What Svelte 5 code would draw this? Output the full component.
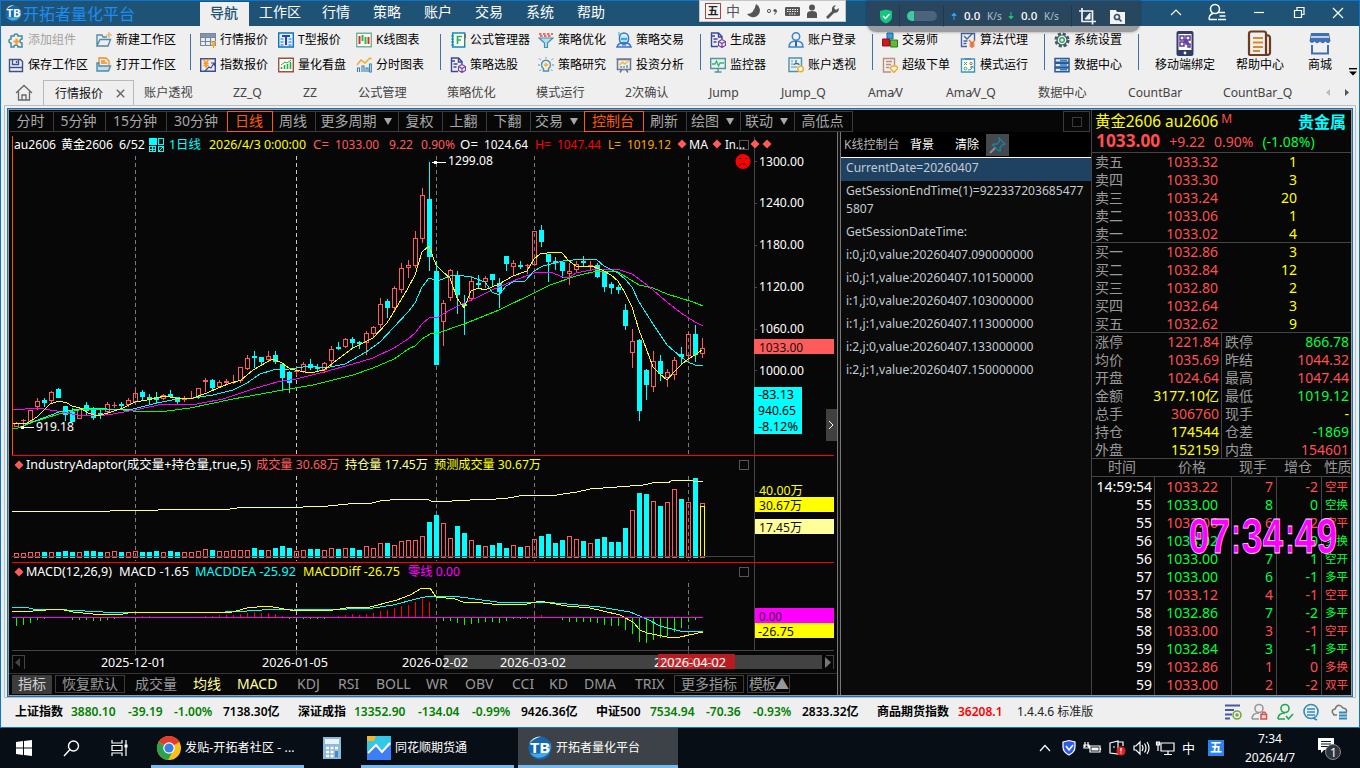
<script lang="ts">
	// 菜单与工具栏
	const menus = ['工作区', '行情', '策略', '账户', '交易', '系统', '帮助'];

	const toolGroups = [
		{ cls: 'g-file', items: [['puzzle', '添加组件'], ['save', '保存工作区'], ['folderNew', '新建工作区'], ['folderOpen', '打开工作区']] },
		{ cls: 'g-quote', items: [['table', '行情报价'], ['index', '指数报价'], ['tquote', 'T型报价'], ['greenChart', '量化看盘'], ['kline', 'K线图表'], ['timeChart', '分时图表']] },
		{ cls: 'g-strategy', items: [['formula', '公式管理器'], ['docBox', '策略选股'], ['funnel', '策略优化'], ['bulb', '策略研究'], ['robot', '策略交易'], ['board', '投资分析']] },
		{ cls: 'g-account', items: [['docBox', '生成器'], ['monitor', '监控器'], ['user', '账户登录'], ['userDoc', '账户透视']] },
		{ cls: 'g-trade', items: [['cubes', '交易师'], ['order', '超级下单'], ['algo', '算法代理'], ['mode', '模式运行']] },
		{ cls: 'g-system', items: [['gear', '系统设置'], ['server', '数据中心']] }
	];

	const bigTools = [
		['phone', '移动端绑定'],
		['news', '帮助中心'],
		['shop', '商城']
	];

	const tabs = ['账户透视', 'ZZ_Q', 'ZZ', '公式管理', '策略优化', '模式运行', '2次确认', 'Jump', 'Jump_Q', 'Ama⁄V', 'Ama⁄V_Q', '数据中心', 'CountBar', 'CountBar_Q'];

	const periods = ['分时', '5分钟', '15分钟', '30分钟', '日线', '周线', '更多周期 ▼', '复权', '上翻', '下翻', '交易 ▼', '控制台', '刷新', '绘图 ▼', '联动 ▼', '高低点'];

	const indicators = ['指标', '恢复默认', '成交量', '均线', 'MACD', 'KDJ', 'RSI', 'BOLL', 'WR', 'OBV', 'CCI', 'KD', 'DMA', 'TRIX', '更多指标', '模板▲'];
	const boxed = ['恢复默认', '更多指标', '模板▲'];
	const picked = ['均线', 'MACD'];

	// 16x16 图标
	const icons: Record<string, string> = {
		puzzle: '<path d="M3 4h3a2 2 0 1 1 4 0h4v3a2 2 0 1 0 0 4v4h-4a2 2 0 1 0-4 0H3v-4a2 2 0 1 1 0-4z" fill="none" stroke="#3f8ca8" stroke-width="1.5"/><path d="M8.500 6.500v6M5.500 9.500h6" stroke="#ff9a1f" stroke-width="2"/>',
		save: '<path d="M1.500 2.500h11l2 2v10h-13z M4.500 2.500v5h6v-5 M2 10.500h12 M8.500 4v2" fill="none" stroke="#3c5290" stroke-width="1.400"/>',
		folderNew: '<path d="M1 14V3h5l1 2h4M1 14L4 7.500h10.500L12 14z" fill="none" stroke="#4f8cab" stroke-width="1.400"/><path d="M13 0v6M10 3h6" stroke="#f2a65a" stroke-width="1.200"/>',
		folderOpen: '<path d="M3 6V1h7l3 3v4M5 4h4M5 6h6" fill="none" stroke="#f08c1e" stroke-width="1.300"/><path d="M1 14V6h2v3h11.500L12.500 14z" fill="#c5dce8" stroke="#4f8cab" stroke-width="1.400"/>',
		table: '<path d="M.5 1.500h15v12H.5z M.5 5.500h15 M.5 9.500h15 M5.500 2v12 M10.500 2v12" fill="none" stroke="#7486a0" stroke-width="1.200"/><path d="M1 2h14v3H1z" fill="#8496ae"/><path d="M11 9l2.500 3L16 9M13.500 12v4M11.500 13h4" stroke="#f5a623" fill="none" stroke-width="1.300"/>',
		index: '<path d="M.7 1.700h14.600v12.600H.7z" fill="none" stroke="#3f4c96" stroke-width="1.400"/><path d="M3 2l3 4 3-4M6 6v5M3.500 6.500h5M3.500 8.500h5" stroke="#ff9418" fill="none" stroke-width="1.400"/><path d="M5 14l4-4 2 1 3-5M11 6h3.500v3" fill="none" stroke="#3f4c96" stroke-width="1.200"/>',
		tquote: '<path d="M.7 1h14.600v14H.7z" fill="#e3f2ff" stroke="#0d72bd" stroke-width="1.400"/><path d="M4 4h8M8 4v9" stroke="#2a3fd0" stroke-width="2"/><path d="M2.500 7h3M2.500 10h3M2.500 13h3M10.500 7h3M10.500 10h3M10.500 13h3" stroke="#0d72bd"/>',
		greenChart: '<path d="M.7 1.200h14.600v13.600H.7z" fill="#fff" stroke="#9b5340" stroke-width="1.400"/><path d="M3.500 12v-2M6.500 12V8M9.500 12V7M12.500 12V5" stroke="#26ad3e" stroke-width="1.600"/><path d="M3 8l4-3 2 1 4-3" fill="none" stroke="#26ad3e"/>',
		kline: '<path d="M.7 1.200h14.600v13.600H.7z" fill="#fff" stroke="#72b596" stroke-width="1.400"/><path d="M3.500 4v8M12.500 5v7" stroke="#e32a2a" stroke-width="2"/><path d="M6.500 3v6M9.500 5v7" stroke="#2fba3a" stroke-width="2"/>',
		timeChart: '<path d="M1 8l4-5 4 3 5-5 1.500 1" fill="none" stroke="#f0ab2b" stroke-width="1.500"/><path d="M1.500 15v-4h2v4M6 15V9h2v6M10 15v-4h2v4M13.500 15V7h1.800v8z" fill="none" stroke="#3c82b0" stroke-width="1.100"/>',
		formula: '<path d="M2.700 1h12v14h-12z" fill="#fff" stroke="#0c8fb5" stroke-width="1.500"/><path d="M1 4h3M1 7h3M1 10h3M1 13h3" stroke="#0c8fb5"/><path d="M12 4.500H7.500V12M7.500 8h3.500" fill="none" stroke="#2bb24c" stroke-width="1.700"/><path d="M15.500 2v4" stroke="#f33" /><path d="M15.500 8v4" stroke="#fb3"/>',
		docBox: '<path d="M8 14.500H1.500V1h7L12 4.500V7M8.500 1v4H12M1 4h4M3.500 7h4M3.500 10h3" fill="none" stroke="#3b4899" stroke-width="1.400"/><path d="M12 7.500l3.500 2v4L12 15.500l-3.500-2v-4zM8.500 9.500l3.500 2 3.500-2M12 11.500v4" fill="#f3e6ff" stroke="#77429c" stroke-width="1.100"/>',
		funnel: '<path d="M1 6h14l-5.500 5v4.500h-3V11z" fill="#b9dceb" stroke="#4093b5" stroke-width="1.200"/><path d="M1 2h14M2 4h12" stroke="#ef6a6a" stroke-width="2" stroke-dasharray="2.500 1.500"/>',
		bulb: '<path d="M5.500 11.500a4.500 4.500 0 1 1 5 0V14h-5z" fill="none" stroke="#4b93a8" stroke-width="1.400"/><path d="M5.500 8L8 5.500 10.500 8 8 10z" fill="#ffb02e"/><path d="M8 0v1.500M1 1.500l1.500 1.500M15 1.500L13.500 3M0 8h2M14 8h2M1.500 14L3 12.500M14.500 14L13 12.500" stroke="#4b93a8"/>',
		robot: '<path d="M3.500 5.500a4.500 4.500 0 0 1 9 0v2a4.500 4.500 0 0 1-9 0zM1 15c1-3.500 3-4.500 7-4.500s6 1 7 4.500z" fill="#d9ebff" stroke="#3f74c4" stroke-width="1.500"/><path d="M5 7h6" stroke="#1eb8ef" stroke-width="2.500"/><path d="M3 0v4" stroke="#1eb8ef"/><path d="M6 13h4" stroke="#3f74c4"/>',
		board: '<path d="M.5 2h15M1.500 2.500h13v10h-13zM4 15.500l2-3M12 15.500l-2-3" fill="none" stroke="#6d7691" stroke-width="1.500"/><path d="M3.500 8l3-3 2 2 4-3" stroke="#ffb32c" fill="none" stroke-width="1.400"/><path d="M5 11V9M8 11V9M11 11V8" stroke="#3c9bc4" stroke-width="1.400"/>',
		monitor: '<path d="M.7 1.500h14.600v10H.7zM8 11.500V15M4.500 15h7" fill="none" stroke="#55939e" stroke-width="1.400"/><path d="M2 7h3l1.500-3L8.500 9 10 6h4" fill="none" stroke="#2dbb72" stroke-width="1.300"/>',
		user: '<circle cx="8" cy="4.500" r="3.700" fill="none" stroke="#3d86cc" stroke-width="1.500"/><path d="M1 15c0-4 2-6 7-6s7 2 7 6z" fill="none" stroke="#3d86cc" stroke-width="1.500"/><path d="M7 9h2v5l-1 1-1-1z" fill="#2d67a3"/>',
		userDoc: '<path d="M10 14.500H1V1h12.500v8" fill="none" stroke="#4b93b0" stroke-width="1.400"/><path d="M3 4h2M3 7h2M3 10h6" stroke="#4b93b0"/><path d="M8 3v3M6 8c0-2 5-2 5 0" stroke="#2a7ca4" fill="none" stroke-width="1.300"/><circle cx="12.500" cy="12" r="2.800" fill="#fff" stroke="#f6aa28" stroke-width="1.400"/>',
		cubes: '<path d="M5 1h6v6H5z" fill="#2f9fe0" stroke="#1a6da3"/><path d="M.5 7h7v7h-7z" fill="#d01822" stroke="#8d1118"/><path d="M8.500 8h7v7h-7z" fill="#5fbd35" stroke="#2f7b1b"/>',
		order: '<path d="M9 15H1.500V1.500h11V8M4 4.500h6M4 7.500h5M4 10.500h3" fill="none" stroke="#be8d7f" stroke-width="1.400"/><path d="M8 11l2-2h4l2 2-4 4.500z" fill="#fff3d8" stroke="#f3a52a" stroke-width="1.300"/>',
		algo: '<path d="M7 14.500H1.500v-13h13V8M4 4l3 3 5-5M3.500 9h4M3.500 11.500h3" fill="none" stroke="#43639f" stroke-width="1.400"/><path d="M9 8l3 3.500L15 8M12 11.500V16M9.500 12h5M9.500 14h5" fill="none" stroke="#ee6c2b" stroke-width="1.400"/>',
		mode: '<path d="M1.500 2h13v13h-13z" fill="#fff" stroke="#3c96b5" stroke-width="1.400"/><path d="M5 1h6v2H5z" fill="#3c96b5"/><path d="M4 5l3 3M7 5l-3 3" stroke="#35a853"/><circle cx="11" cy="6.500" r="1.200" fill="none" stroke="#e5582d"/><circle cx="5.500" cy="11.500" r="1.400" fill="none" stroke="#35a853"/><path d="M8 13c3 0 4-1 4-4M10 10.500L12 9l1.500 2" stroke="#2a8fc0" fill="none"/>',
		gear: '<circle cx="8" cy="8" r="6.300" fill="none" stroke="#3f5b66" stroke-width="2.600" stroke-dasharray="3 1.950"/><circle cx="8" cy="8" r="5" fill="#efefef" stroke="#3f5b66" stroke-width="1.200"/><circle cx="8" cy="8" r="2.300" fill="none" stroke="#2fa465" stroke-width="1.400"/>',
		server: '<path d="M1 1.500h14v3.700H1zM1 6.200h14v3.700H1zM1 11h14v3.700H1z" fill="#dceafb" stroke="#2c5a94" stroke-width="1.500"/><path d="M6 3.500h7M6 8h7M6 12.800h7" stroke="#2d7ad0" stroke-width="1.500"/>',
		phone: '<rect x="4.500" y="1" width="17" height="25" rx="2" fill="#303d68"/><path d="M6.500 4h13v16h-13z" fill="#fff"/><path d="M8 6h4v4H8zM14 6h4v4h-4zM8 12h4v4H8zM14 12h2v2h-2zM16 14h2v3h-2zM13 10h2v2h-2z" fill="none" stroke="#5b3a9c" stroke-width="1.500"/><circle cx="13" cy="23" r="1.400" fill="#fff"/>',
		news: '<path d="M2 24V4q0-2.500 2.500-2.500H17q2 0 2 2V25H4q-2 0-2-1zM19 5q4 0 4 3v15q0 2-4 2" fill="none" stroke="#6d3c1f" stroke-width="2.200"/><path d="M6 8h10M6 12.500h10M6 17h10M6 21h7" stroke="#d88a33" stroke-width="1.800"/>',
		shop: '<path d="M4 3h18l1.500 8q-2 4-5 .5-3 3.500-5.500 0-3 3.500-5.500 0-3 3-5-.5z" fill="#3f6fb5"/><path d="M4 7h18" stroke="#e9eef7" stroke-width="1.500"/><path d="M5 15v8.500h16V15" fill="none" stroke="#3f6fb5" stroke-width="2"/>'
	};

	// K线: [高, 实体上沿, 实体下沿, 低, 涨=1/跌=0]
	const candles = [
		[422,423,427,427,1],[419,420,421,425,1],[410,410,422,423,1],[398,401,407,410,1],[398,400,403,407,0],[391,392,401,404,1],[388,389,398,398,0],[406,406,415,421,0],[408,412,422,422,0],[409,409,419,419,1],
		[402,405,411,415,0],[407,408,418,420,0],[409,413,415,419,0],[402,404,412,414,1],[402,405,405,408,1],[402,404,406,408,0],[398,400,405,407,1],[390,393,402,404,1],[390,392,397,400,0],[394,397,399,404,0],
		[392,397,400,403,0],[394,395,399,400,1],[390,394,397,398,0],[397,397,402,404,0],[396,399,399,402,1],[391,398,398,399,1],[388,388,397,399,1],[378,380,382,392,1],[379,380,388,390,0],[380,382,387,388,1],
		[379,381,383,385,1],[375,382,382,384,1],[367,367,381,383,1],[355,358,369,370,1],[351,356,358,368,0],[357,357,362,365,0],[351,356,360,362,1],[351,355,362,364,0],[363,364,378,390,0],[371,372,383,393,0],
		[366,371,372,376,1],[362,364,372,373,1],[359,364,368,370,0],[364,367,369,372,0],[362,363,370,373,1],[346,349,361,366,1],[342,347,349,350,0],[338,339,347,348,1],[337,339,343,348,0],[341,342,344,349,0],
		[331,333,343,355,1],[326,327,334,337,1],[298,304,325,328,1],[299,301,308,318,0],[286,288,308,310,1],[263,268,290,293,1],[260,265,268,278,1],[231,238,266,268,1],[188,195,239,243,1],[162,199,257,271,0],
		[261,271,365,365,0],[300,303,322,346,1],[269,270,298,301,1],[271,275,295,314,0],[295,304,306,335,0],[276,281,299,301,1],[275,283,285,288,0],[276,278,282,288,1],[274,274,280,286,0],[278,283,292,308,0],
		[256,256,264,271,0],[260,263,267,275,1],[261,265,267,269,0],[264,265,266,274,1],[231,231,265,266,1],[225,230,242,247,0],[254,254,262,282,0],[257,261,263,270,0],[262,262,271,278,0],[263,271,274,285,1],
		[261,264,270,273,1],[256,261,263,266,0],[261,265,266,270,1],[263,265,277,278,0],[271,271,287,292,0],[282,284,288,294,0],[285,287,290,294,0],[304,310,326,330,0],[329,341,353,368,1],[339,340,411,421,0],
		[369,370,385,400,0],[351,361,387,392,1],[355,361,374,381,0],[369,372,378,387,1],[357,360,375,380,1],[347,354,357,364,0],[332,334,356,362,1],[325,334,355,362,0],[338,348,354,358,1]
	];

	const volTops = [
		553,553,552,552,552,552,552,551,552,552,551,551,552,552,551,552,552,551,552,552,
		551,552,551,552,552,552,551,549,550,551,551,550,550,550,548,550,550,548,546,548,
		551,550,549,549,550,548,549,548,548,550,546,548,543,543,545,541,540,540,536,522,
		515,523,538,526,533,540,545,546,545,543,548,545,547,546,539,536,534,543,540,536,
		539,541,543,539,537,542,542,528,510,493,494,501,506,502,489,499,502,478,503
	];

	const macdBars = [
		-9,-8,-6,-3,-2,0,0,-1,-3,-3,-3,-4,-4,-3,-2,-1,-1,0,1,1,
		0,0,0,-1,-1,-1,0,1,1,2,2,2,3,4,5,4,4,3,1,-2,
		-2,-2,-2,-2,-2,0,1,2,3,2,3,4,6,7,9,11,12,15,20,15,
		0,-4,-4,-6,-8,-7,-6,-5,-5,-6,-4,-2,-2,-2,2,2,0,-1,-3,-5,
		-5,-5,-5,-6,-8,-9,-9,-13,-17,-25,-26,-23,-21,-19,-15,-11,-5,-3,-1
	];

	const lines = [
		['#00ff00', '13,429 18,428 33,422 59,414 79,410 97,409 113,409 143,412 167,411 190,408 233,399 283,390 313,385 353,375 373,368 394,359 410,348 415,346 422,339 430,334 438,333 464,324 499,310 534,293 550,285 576,276 597,271 618,272 639,285 653,288 667,294 693,302 703,306'],
		['#ff00ff', '13,410 37,408 57,411 77,415 97,416 113,414 135,410 163,404 197,404 223,399 253,389 277,382 296,379 324,372 353,364 373,358 394,348 408,339 415,333 422,324 429,318 438,317 450,310 464,303 478,297 492,290 513,281 534,273 550,272 563,277 570,277 576,273 597,269 617,269 632,274 647,285 667,302 681,313 695,322 703,326'],
		['#00ffff', '13,423 27,424 43,418 59,412 79,409 97,408 117,410 133,409 157,403 177,399 193,398 213,395 233,390 247,383 260,374 273,370 289,369 310,366 325,368 345,364 366,352 380,342 394,327 408,312 415,303 422,287 429,278 438,281 450,276 457,275 471,277 485,282 492,292 499,295 506,286 513,282 525,281 534,271 543,266 563,261 583,259 597,260 604,266 618,273 625,279 632,287 639,302 653,324 667,345 681,357 688,362 695,365 703,365'],
		['#ffff00', '13,423 27,423 37,417 50,404 59,401 67,403 72,406 80,408 88,413 97,416 108,413 123,408 135,402 147,400 165,396 180,399 193,398 207,393 218,388 228,384 241,380 253,370 267,362 273,359 282,363 290,369 300,371 310,373 324,370 333,363 353,348 373,338 387,323 401,300 408,288 415,275 422,252 429,246 436,265 443,272 450,278 457,298 464,308 471,291 478,288 485,290 499,284 513,276 527,271 534,259 540,254 555,252 562,253 569,261 576,266 592,266 597,268 604,271 611,275 618,281 625,293 632,307 639,330 646,348 653,367 660,374 667,380 674,372 681,365 688,359 695,355 702,350'],
		['#ffff99', '12,512 33,511 110,511 112,510 158,510 161,509 230,509 245,507 303,507 328,506 358,503 368,504 380,501 400,499 426,499 434,502 470,500 480,499 485,500 508,498 525,495 550,496 577,492 590,489 617,487 643,485 657,482 668,483 673,480 688,480 693,481 703,482'],
		['#00ffff', '12,607 25,607 33,609 67,610 103,612 133,612 203,613 247,611 277,609 293,609 333,610 347,609 373,608 393,605 420,598 430,596 453,596 497,602 533,603 543,602 567,604 600,607 630,612 647,619 660,626 680,631 703,632'],
		['#ffff00', '12,611 33,611 60,609 73,612 93,614 123,614 133,612 187,612 193,613 233,612 247,608 267,606 290,610 307,611 333,610 353,607 370,607 397,600 410,595 422,588 430,588 436,597 455,599 463,602 483,603 500,605 527,604 540,601 550,603 567,606 590,608 620,615 633,622 640,630 647,633 667,637 680,637 703,632']
	];

	const gridX = [135, 296, 436, 534, 688];
	const barX = (i: number) => 16 + i * 7;

	// [x, 中线y, 宽度, 颜色, 文本]
	const labels: [number, number, number, string, string][] = [
		[14, 145, 42, '#fff', 'au2606'], [61, 145, 52, '#fff', '黄金2606'], [119, 145, 26, '#fff', '6/52'],
		[169, 145, 32, '#0ff', '1日线'], [209, 145, 97, '#ff0', '2026/4/3 0:00:00'],
		[313, 145, 16, '#ff5b5b', 'C='], [335, 145, 44, '#ff5b5b', '1033.00'], [389, 145, 24, '#ff5b5b', '9.22'], [421, 145, 34, '#ff5b5b', '0.90%'],
		[460, 145, 18, '#fff', 'O='], [484, 145, 44, '#fff', '1024.64'], [535, 145, 16, '#f00', 'H='], [557, 145, 44, '#f00', '1047.44'],
		[608, 145, 13, '#ffa500', 'L='], [627, 145, 44, '#ffa500', '1019.12'], [689, 145, 19, '#fff', 'MA'], [725, 145, 20, '#fff', 'In...'],
		[448, 161, 45, '#fff', '1299.08'], [36, 427, 38, '#fff', '919.18'],
		[759, 162, 45, '#fff', '1300.00'], [759, 203, 45, '#fff', '1240.00'], [759, 245, 45, '#fff', '1180.00'], [759, 287, 45, '#fff', '1120.00'],
		[759, 329, 45, '#fff', '1060.00'], [759, 348, 44, '#111', '1033.00'], [759, 371, 45, '#fff', '1000.00'],
		[758, 395, 36, '#000', '-83.13'], [758, 411, 38, '#000', '940.65'], [758, 427, 40, '#000', '-8.12%'],
		[26, 465, 225, '#fff', 'IndustryAdaptor(成交量+持仓量,true,5)'], [256, 465, 83, '#ff5b5b', '成交量 30.68万'],
		[345, 465, 83, '#ffff99', '持仓量 17.45万'], [434, 465, 107, '#ff0', '预测成交量 30.67万'],
		[759, 491, 44, '#ff0', '40.00万'], [759, 506, 43, '#111', '30.67万'], [759, 528, 43, '#111', '17.45万'],
		[26, 572, 86, '#fff', 'MACD(12,26,9)'], [119, 572, 70, '#fff', 'MACD -1.65'], [195, 572, 101, '#0ff', 'MACDDEA -25.92'],
		[303, 572, 97, '#ff0', 'MACDDiff -26.75'], [408, 572, 52, '#f0f', '零线 0.00'],
		[759, 617, 23, '#400040', '0.00'], [758, 632, 36, '#111', '-26.75'],
		[101, 663, 65, '#fff', '2025-12-01'], [262, 663, 66, '#fff', '2026-01-05'], [402, 663, 66, '#fff', '2026-02-02'],
		[500, 663, 66, '#fff', '2026-03-02'], [660, 663, 66, '#fff', '2026-04-02']
	];

	const logs = [
		'CurrentDate=20260407', 'GetSessionEndTime(1)=9223372036854775807', 'GetSessionDateTime:',
		'i:0,j:0,value:20260407.090000000', 'i:0,j:1,value:20260407.101500000', 'i:1,j:0,value:20260407.103000000',
		'i:1,j:1,value:20260407.113000000', 'i:2,j:0,value:20260407.133000000', 'i:2,j:1,value:20260407.150000000'
	];

	// 盘口
	const asks = [['卖五', '1033.32', '1'], ['卖四', '1033.30', '3'], ['卖三', '1033.24', '20'], ['卖二', '1033.06', '1'], ['卖一', '1033.02', '4']];
	const bids = [['买一', '1032.86', '3'], ['买二', '1032.84', '12'], ['买三', '1032.80', '2'], ['买四', '1032.64', '3'], ['买五', '1032.62', '9']];
	const stats = [
		['涨停', '1221.84', 'up', '跌停', '866.78', 'down'],
		['均价', '1035.69', 'up', '昨结', '1044.32', 'up'],
		['开盘', '1024.64', 'up', '最高', '1047.44', 'up'],
		['金额', '3177.10亿', 'num', '最低', '1019.12', 'down'],
		['总手', '306760', 'up', '现手', '-', 'num'],
		['持仓', '174544', 'num', '仓差', '-1869', 'down'],
		['外盘', '152159', 'num', '内盘', '154601', 'up']
	];
	const trades: [string, string, string, string, string, string][] = [
		['14:59:54', '1033.22', '7', '-2', '空平', 'up'],
		['55', '1033.00', '8', '0', '空换', 'down'],
		['55', '1033.06', '6', '-2', '空平', 'up'],
		['56', '1033.02', '1', '0', '多换', 'down'],
		['56', '1033.00', '7', '1', '空开', 'down'],
		['57', '1033.00', '6', '-1', '多平', 'down'],
		['57', '1033.12', '4', '-1', '空平', 'up'],
		['58', '1032.86', '7', '-2', '多平', 'down'],
		['58', '1033.00', '3', '-1', '空平', 'up'],
		['59', '1032.84', '3', '-1', '多平', 'down'],
		['59', '1032.86', '1', '0', '多换', 'up'],
		['59', '1033.00', '2', '-2', '双平', 'up']
	];

	// 悬浮时钟 [字符, x, 宽]
	const clock: [string, number, number][] = [['0', 0, 22], ['7', 21, 22], [':', 40, 16], ['3', 53, 22], ['4', 74, 22], [':', 94, 16], ['4', 106, 22], ['9', 128, 22]];

	// 状态栏 [文本, 样式]
	const ticker = [
		['上证指数', ''], ['3880.10', 'g'], ['-39.19', 'g'], ['-1.00%', 'g'], ['7138.30亿', ''],
		['深证成指', ''], ['13352.90', 'g'], ['-134.04', 'g'], ['-0.99%', 'g'], ['9426.36亿', ''],
		['中证500', ''], ['7534.94', 'g'], ['-70.36', 'g'], ['-0.93%', 'g'], ['2833.32亿', ''],
		['商品期货指数', ''], ['36208.1', 'r'], ['1.4.4.6 标准版', 'ver']
	];
</script>

{#snippet logo(size: number)}
	<svg width={size} height={size} viewBox="0 0 24 24">
		<circle cx="12" cy="12" r="11.500" fill="#1667ae" />
		<path d="M2 17a11.500 11.500 0 0 0 20-11c0 8-8 14-20 11z" fill="#3fa9ee" />
		<path d="M1 8a12 12 0 0 1 12-7.500C7 2 3 5 1 8z" fill="#e8f5ff" />
		<text x="2" y="17" font-size="14" font-weight="700" fill="#fff" textLength="20" lengthAdjust="spacingAndGlyphs">TB</text>
	</svg>
{/snippet}

<div class="window">
	<header class="titlebar">
		<div class="brand">{@render logo(17)}<span>开拓者量化平台</span></div>
		<nav class="menu">
			<span class="menu-active">导航</span>
			{#each menus as m}<span>{m}</span>{/each}
		</nav>
		<div class="win-buttons">
			<svg width="200" height="24" viewBox="1160 1 200 24" fill="none" stroke="#fff" stroke-width="1.200">
				<path d="M1171 15l5-5 5 5" />
				<circle cx="1215" cy="9" r="4.500" stroke-width="1.600" />
				<path d="M1209 19.500q0-5 4-6M1218 12.500h7M1219.500 16h6M1209 19.500h8M1218 19.500h8" stroke-width="1.400" />
				<path d="M1254 12.500h10" />
				<path d="M1294.500 10.500h7v7h-7zM1297 10v-2.500h7v7h-2.500" />
				<path d="M1333 8l10 10M1343 8l-10 10" />
			</svg>
		</div>
	</header>

	<div class="toolbar">
		{#each toolGroups as g}
			<div class="tool-group {g.cls}">
				{#each g.items as [icon, label]}
					<div class="tool" class:off={label === '添加组件'}>
						<svg width="16" height="16" viewBox="0 0 16 16">{@html icons[icon]}</svg><span>{label}</span>
					</div>
				{/each}
			</div>
		{/each}
		<div class="big-tools">
			{#each bigTools as [icon, label]}
				<div class="big-tool">
					<svg width="26" height="27" viewBox="0 0 26 27">{@html icons[icon]}</svg><span>{label}</span>
				</div>
			{/each}
		</div>
		<svg class="overflow" width="8" height="8" viewBox="0 0 8 8"><path d="M0 .7h8" stroke="#000" stroke-width="1.400" /><path d="M0 3.500h8L4 7.500z" /></svg>
	</div>

	<div class="tabs">
		<div class="home">
			<svg width="18" height="18" viewBox="0 0 18 18" fill="none" stroke="#666" stroke-width="1.300"><path d="M1 9l8-7.500L17 9M3.500 7.500V16h11V7.500M7 16v-5h4v5" /></svg>
		</div>
		<div class="tab-active"><span>行情报价</span>
			<svg width="9" height="9" viewBox="0 0 9 9" stroke="#666" stroke-width="1.400"><path d="M.8.8l7.400 7.400M8.200.8L.8 8.200" /></svg>
		</div>
		<div class="tab-list">
			{#each tabs as t}<span>{t}</span>{/each}
		</div>
		<svg class="tab-arrows" width="26" height="9" viewBox="0 0 26 9"><path d="M5 1v7L1 4.500z" fill="#bbb" /><path d="M20 1v7l4-3.500z" fill="#555" /></svg>
	</div>

	<div class="workspace">
		<div class="desk">
			<section class="left">
				<div class="periods">
					{#each periods as p}
						<span class:on={p === '日线' || p === '控制台'}>{#if p.includes('▼')}{p.split(' ')[0]}<i></i>{:else}{p}{/if}</span>
					{/each}
					<b class="maxi"></b>
				</div>
				<div class="panes">
					<div class="chart-pane">
						<svg class="chart" width="828" height="541" viewBox="9 132 828 541">
							<g shape-rendering="crispEdges" fill="none">
								{#each gridX as x}
									<path d="M{x + 0.5} 156V454M{x + 0.5} 476V561M{x + 0.5} 583V650" stroke={x === 296 ? '#c8c8c8' : '#7a7a7a'} stroke-dasharray="4 3" />
									<path d="M{x + 0.5} 651v4" stroke="#444" />
								{/each}
								<path d="M12.500 136V455" stroke="#ff5500" />
								<path d="M754.500 137V650M12 650.500H834M12 556.500H754M754 161.500h3M754 203.500h3M754 245.500h3M754 287.500h3M754 329.500h3M754 370.500h3M754 491.500h3" stroke="#444" />
								{#each candles as [h, t, b, l, up], i}
									{@const x = barX(i)}
									{#if up}
										<path d="M{x + 0.5} {h}V{t}M{x + 0.5} {b}V{l}" stroke="#ff5b5b" />
										<rect x={x - 1.5} y={t + 0.5} width="4" height={Math.max(b - t - 1, 0.1)} stroke="#ff5b5b" />
										<rect x={x - 1.5} y={volTops[i] + 0.5} width="4" height={557 - volTops[i]} stroke="#ff5b5b" />
									{:else}
										<path d="M{x + 0.5} {h}V{l}" stroke="#0ff" />
										<rect x={x - 2} y={t} width="5" height={b - t} fill="#0ff" />
										<rect x={x - 2} y={volTops[i]} width="5" height={558 - volTops[i]} fill="#0ff" />
									{/if}
								{/each}
								<rect x="700.500" y="506.500" width="4" height="50" stroke="#ff0" />
								<path d="M12 556.500H754" stroke="#444" />
								{#each macdBars as v, i}
									{#if v}<path d="M{barX(i) + 0.5} 617v{-v}" stroke={v > 0 ? '#f00' : '#0f0'} />{/if}
								{/each}
								{#each lines as [color, points]}<polyline {points} stroke={color} />{/each}
								<rect x="12" y="617" width="691" height="1" fill="#f0f" />
								<path d="M12 455.500H834M12 562.500H834" stroke="#f00" />
								<path d="M739.500 140.500h9v9h-9zM739.500 460.500h9v9h-9zM739.500 567.500h9v9h-9z" stroke="#555" />
								<path d="M432 162.500h14M22 427.500h12" stroke="#fff" />
								<path d="M434 161h3v3h-3zM21 426h3v3h-3z" fill="#fff" />
								<path d="M754 339h80v15h-80z" fill="#ff5b5b" />
								<path d="M754 387h48v47h-48z" fill="#0ff" />
								<path d="M755 497h79v15h-79zM755 623h79v15h-79z" fill="#ff0" />
								<path d="M755 519h79v15h-79z" fill="#ffff99" />
								<path d="M755 608h79v15h-79z" fill="#f0f" />
								<path d="M444 655h378v14H444z" fill="#424242" />
								<path d="M658 654h77v15h-77z" fill="#b81c20" />
								<path d="M12.500 669v-13.500h12V669M833.500 669v-13.500h-8" stroke="#444" />
								<path d="M826 409h11v32h-11z" fill="#404040" />
								<path d="M149 138h8v7h-8z" fill="#0ff" />
								<path d="M158.500 138.500h5v6h-5zM149.500 146.500h6v5h-6zM158.500 146.500h5v5h-5zM149 149h7M152.500 146v6" stroke="#0ff" />
							</g>
							<path d="M159 151l4-4" stroke="#0ff" />
							<path d="M20 658v9l-5-4.500z" fill="#444" />
							<path d="M825 657v11l6-5.500z" fill="#777" />
							<path d="M829 421l4 4-4 4" fill="none" stroke="#fff" />
							{#each [[682, 144], [717, 144], [755, 144], [767, 144], [19, 465], [19, 572]] as [x, y]}
								<path d="M{x} {y - 4.5}l4.500 4.500-4.500 4.500-4.500-4.500z" fill="#ff5b5b" />
							{/each}
							<circle cx="743" cy="161.500" r="7.500" fill="#f00" />
							<path d="M739 158.500h2.500M745 158.500h2.500M739 166q4-5 8 0" stroke="#300" fill="none" />
							<text x="654" y="667" fill="#fff" textLength="66" lengthAdjust="spacingAndGlyphs">2026-04-02</text>
							<path d="M658 654h77v15h-77z" fill="#b81c20" fill-opacity=".75" />
							{#each labels as [x, y, w, fill, t]}
								<text {x} y={y + 4} {fill} textLength={w} lengthAdjust="spacingAndGlyphs">{t}</text>
							{/each}
						</svg>
						<div class="indicators">
							{#each indicators as n}
								<span class:solid={n === '指标'} class:boxed={boxed.includes(n)} class:picked={picked.includes(n)}>{n}</span>
							{/each}
						</div>
					</div>
					<div class="splitter"></div>
					<div class="console">
						<div class="console-head">
							<span class="name">K线控制台</span><span>背景</span><span>清除</span>
							<div class="pin">
								<svg width="17" height="17" viewBox="0 0 17 17"><path d="M10 1l6 6-2 .5-3 3 .5 3-1.500.5-6.500-6 1-1 3 .3 3-3z" fill="none" stroke="#1b7f9e" stroke-width="1.400" /><path d="M6 11l-5 5" stroke="#8a8f93" stroke-width="2" /></svg>
							</div>
						</div>
						{#each logs as l, i}
							<p class:sel={i === 0}>{l}</p>
						{/each}
					</div>
				</div>
			</section>

			<section class="quote">
				<div class="q-title"><span>黄金2606 au2606</span><sup>M</sup><b>贵金属</b></div>
				<div class="q-last"><b>1033.00</b><span class="up">+9.22</span><span class="up">0.90%</span><span class="down">(-1.08%)</span></div>
				{#each [asks, bids] as side}
					<div class="book">
						{#each side as [n, p, v]}
							<div class="book-row"><span>{n}</span><span class="up">{p}</span><span class="num">{v}</span></div>
						{/each}
					</div>
				{/each}
				<div class="stats">
					{#each stats as [n1, v1, c1, n2, v2, c2]}
						<div class="stat"><span>{n1}</span><span class={c1}>{v1}</span></div>
						<div class="stat"><span>{n2}</span><span class={c2}>{v2}</span></div>
					{/each}
				</div>
				<div class="trade-head"><span>时间</span><span>价格</span><span>现手</span><span>增仓</span><span>性质</span></div>
				<div class="trades">
					{#each trades as [time, price, vol, inc, kind, dir]}
						<div class="trade {dir}"><span class="time">{time}</span><span class="price">{price}</span><span>{vol}</span><span>{inc}</span><span class="kind">{kind}</span></div>
					{/each}
					<svg class="clock" width="165" height="70" viewBox="-2 0 165 70">
						{#each clock as [ch, x, w]}
							<text {x} y="52" textLength={w} lengthAdjust="spacingAndGlyphs">{ch}</text>
						{/each}
					</svg>
				</div>
			</section>
		</div>
	</div>

	<footer class="status">
		<div class="ticker">
			{#each ticker as [t, c]}<span class={c}>{t}</span>{/each}
		</div>
		<svg width="124" height="18" viewBox="0 0 124 18" fill="none" stroke-width="1.600">
			<path d="M0 2.500h15M0 7h9M0 11.500h7M0 15.500h5" stroke="#4a57a5" stroke-width="2" /><circle cx="12" cy="12" r="4" stroke="#7aa545" /><circle cx="12" cy="12" r="1" stroke="#7aa545" />
			<circle cx="34" cy="5.500" r="4" stroke="#999" /><path d="M27 16q0-6 7-6M27 16h7" stroke="#999" /><rect x="36" y="11.500" width="5.500" height="4.500" stroke="#e05252" /><path d="M37 11q2-4 4 0" stroke="#e05252" />
			<circle cx="60" cy="5.500" r="4" stroke="#1da850" /><path d="M53 16q0-6 7-6M53 16h7M61 13l2.500 3 4.500-5" stroke="#1da850" />
			<circle cx="86" cy="8.500" r="7" stroke="#2e8cbc" /><path d="M82 6h8M82 9h8M82 12h8M88 15l4 2" stroke="#2e8cbc" />
			<path d="M112 12h-3q-4-5 1-6 3-7 8-1 5 1 3 5" stroke="#777" /><path d="M114 9.500h8M114 12.500h8M114 15.500h8" stroke="#2e8cbc" stroke-width="2" />
		</svg>
	</footer>
</div>

<div class="ime">
	<span class="ime-logo">五</span><span>中</span>
	<svg width="98" height="18" viewBox="0 0 98 18" fill="#555">
		<path d="M11 2a7 7 0 1 1-9 10q7 0 9-10z" />
		<circle cx="24" cy="9" r="1.600" fill="none" stroke="#555" /><circle cx="30" cy="8.500" r="1.600" /><path d="M31.500 8.500q0 3-2.500 4" stroke="#555" fill="none" />
		<rect x="40" y="5" width="15" height="9" rx="1" /><path d="M42 7.500h11M42 9.500h11M44 12h7" stroke="#f4f4f4" stroke-dasharray="1.500 1" />
		<circle cx="67" cy="5.500" r="3" /><path d="M62 16v-4q0-3 5-3t5 3v4z" />
		<path d="M81 15l6-6q-1-5 4-6l-2 3 2 2 3-2q0 5-5 5l-6 6z" />
	</svg>
</div>

<div class="netmon">
	<svg width="14" height="15" viewBox="0 0 14 15"><path d="M1 2l6-1.500L13 2v6q0 4-6 6.500Q1 12 1 8z" fill="#15c47e" /><path d="M4 7l2.500 2.500L10.500 5" fill="none" stroke="#fff" stroke-width="1.500" /></svg>
	<i class="sep"></i><i class="meter"></i><i class="sep"></i>
	<svg class="arrow" width="6" height="8" viewBox="0 0 6 8" stroke="#22a8ff" fill="#22a8ff"><path d="M3 8V3M3 1L1 3.500h4z" /></svg>
	<b>0.0</b><em>K/s</em>
	<svg class="arrow" width="6" height="8" viewBox="0 0 6 8" stroke="#18c964" fill="#18c964"><path d="M3 0v5M3 7L1 4.500h4z" /></svg>
	<b>0.0</b><em>K/s</em>
	<i class="sep"></i>
	<svg width="48" height="17" viewBox="0 0 48 17" fill="none" stroke="#f2f2f2" stroke-width="1.700"><path d="M3 0v13.500h14M0 3h13.500v13.500" /><path d="M6 11l5-6v6z" fill="#f2f2f2" stroke-width="1" /><path d="M31 2h6l1 2h8v12H31z" fill="#f2f2f2" stroke="none" /><circle cx="38" cy="9" r="2.500" stroke="#375266" /><path d="M40 11l2.500 2.500" stroke="#375266" /></svg>
</div>

<div class="taskbar">
	<div class="task-start">
		<svg width="16" height="16" viewBox="0 0 16 16" fill="#fff"><path d="M0 2l7-1v6.500H0zM8 .9L16 0v7.500H8zM0 8.500h7V15l-7-1zM8 8.500h8V16l-8-1z" /></svg>
		<svg width="17" height="17" viewBox="0 0 17 17" fill="none" stroke="#fff" stroke-width="1.400"><circle cx="10.500" cy="6" r="5" /><path d="M7 9.500L1 16" /></svg>
		<svg width="18" height="16" viewBox="0 0 18 16" fill="none" stroke="#fff" stroke-width="1.200"><path d="M1 0v3h10V0M1 16v-3h10v3M1 5.500h10v5H1zM15 0v16" /><path d="M13.500 6h3" stroke-width="3" /></svg>
	</div>
	<div class="task">
		<svg width="24" height="24" viewBox="0 0 24 24"><circle cx="12" cy="12" r="12" fill="#fbc116" /><path d="M12 12L1.600 6A12 12 0 0 1 22.400 6z" fill="#e33b2e" /><path d="M12 12L1.600 6A12 12 0 0 0 11 24l5-9z" fill="#2ba24c" /><circle cx="12" cy="12" r="5.800" fill="#fff" /><circle cx="12" cy="12" r="4.600" fill="#3b7de9" /></svg>
		<span class="wide">发贴-开拓者社区 - ...</span>
	</div>
	<svg class="calc" width="18" height="24" viewBox="0 0 18 24"><path d="M0 1h18v22H0z" fill="#8fb9d8" /><path d="M2 3h14v5H2z" fill="#e8f4fb" /><path d="M3 12h12M3 16h12M3 20h12" stroke="#fff" stroke-width="2.600" stroke-dasharray="3 1.500" /><path d="M12 15h3v6.500h-3z" fill="#3d8bd0" /></svg>
	<div class="task">
		<svg width="24" height="24" viewBox="0 0 24 24"><path d="M0 0h24v24H0z" fill="#3d7df5" /><path d="M0 0h24v9L16 15 9 8 0 16z" fill="#33c8e8" /><path d="M0 0h9l-2 5H0z" fill="#f6b32c" /><path d="M1 17l8-8 6 7 8-9" fill="none" stroke="#fff" stroke-width="2" /></svg>
		<span>同花顺期货通</span>
	</div>
	<div class="task current">{@render logo(24)}<span>开拓者量化平台</span></div>
	<div class="tray">
		<svg width="140" height="18" viewBox="0 0 140 18" fill="none" stroke="#fff" stroke-width="1.200">
			<path d="M1 12l5-5.500L11 12" />
			<path d="M24 3l6-1.500L36 3v5q0 5-6 8-6-3-6-8z" fill="#2a5cf0" /><path d="M27 7l3 4 4-5" stroke-width="1.600" />
			<path d="M51 7h10v6H51zM61.500 9v2M46 3v5M49 3v5M45 6h5v3h-5z" /><path d="M53 9h6v2h-6z" fill="#fff" />
			<path d="M71 4l8-2v13l-8-1zM79 3h5v4M74 8h2" /><circle cx="82" cy="12" r="4.500" fill="#e02424" stroke="none" /><path d="M82 9v3.500M82 13.500v1" />
			<path d="M95 7h2l4-4v12l-4-4h-2zM103 6q2 3 0 6M105.500 4.500q3 4.500 0 9M108 3q4 6 0 12" />
			<path d="M122 4h13v8h-13zM129 12v3M125 15.500h8M119 3v9M117.500 3h3v3h-3z" />
		</svg>
		<span class="zh">中</span><span class="wubi">五</span>
		<div class="date"><span>7:34</span><span>2026/4/7</span></div>
		<svg width="30" height="26" viewBox="0 0 30 26"><path d="M2 3h16v12H8l-3 3v-3H2z" fill="#fff" /><path d="M5 6.500h10M5 9h10M5 11.500h10" stroke="#0c131b" /><circle cx="17" cy="17" r="7.500" fill="#30363d" stroke="#888" /><text x="14" y="21.500" font-size="12" fill="#fff">1</text></svg>
	</div>
</div>

<style>
	:global(body) {
		width: 1360px;
		height: 768px;
		overflow: hidden;
		font-family: 'Noto Sans', 'Noto Sans CJK SC', sans-serif;
		font-size: 12px;
		line-height: 16px;
		color: #111;
	}

	span,
	b {
		white-space: nowrap;
	}

	.window {
		box-sizing: border-box;
		width: 1360px;
		height: 728px;
		display: flex;
		flex-direction: column;
		background: #efefef;
		border: 1px solid #0a74cf;
	}

	/* 标题栏 */
	.titlebar {
		height: 25px;
		display: flex;
		background: #1f5375;
		color: #fff;
	}

	.brand {
		width: 199px;
		display: flex;
		align-items: center;
		gap: 1px;
		padding-left: 4px;
		box-sizing: border-box;
		color: #1b8df2;
		font-size: 16px;
	}

	.menu {
		flex: 1;
		display: grid;
		grid-template-columns: 59px 63px 51px 51px 51px 51px 51px 40px;
		font-size: 14px;
		line-height: 22px;
	}

	.menu-active {
		width: 49px;
		margin-top: 1px;
		line-height: 21px;
		box-sizing: border-box;
		padding-left: 10px;
		background: #efefef;
		color: #1f5375;
		font-weight: 500;
	}

	.win-buttons {
		width: 199px;
	}

	/* 工具栏 */
	.toolbar {
		height: 50px;
		display: flex;
		padding-left: 7px;
		color: #000;
	}

	.tool-group {
		height: 36px;
		margin: 8px 9px 0 0;
		padding-right: 16px;
		border-right: 1px solid #4370ab;
		display: grid;
		grid-auto-flow: column;
		grid-template-rows: 12px 12px;
		row-gap: 13px;
		grid-template-columns: 78px 68px;
	}

	.g-file {
		grid-template-columns: 88px 80px;
		padding-right: 14px;
	}

	.g-quote {
		grid-template-columns: 78px 78px 68px;
	}

	.g-strategy {
		grid-template-columns: 88px 78px 68px;
	}

	.g-system {
		grid-template-columns: 68px;
	}

	.tool {
		display: flex;
		align-items: center;
		gap: 4px;
		height: 12px;
	}

	.tool svg {
		flex: none;
	}

	.off {
		color: #a2a2a2;
	}

	.big-tools {
		display: grid;
		grid-template-columns: 76px 74px 46px;
		justify-items: center;
		margin-left: -1px;
	}

	.big-tool {
		display: flex;
		flex-direction: column;
		align-items: center;
		padding-top: 4px;
	}

	.overflow {
		flex: none;
		align-self: flex-end;
		margin-left: 6px;
	}

	/* 页签 */
	.tabs {
		height: 29px;
		display: flex;
		color: #444;
		line-height: 30px;
		font-size: 12px;
	}

	.home {
		width: 42px;
		padding: 8px 0 0 14px;
		box-sizing: border-box;
	}

	.home svg {
		display: block;
	}

	.tab-active {
		width: 91px;
		height: 25px;
		margin-top: 4px;
		line-height: 23px;
		box-sizing: border-box;
		border: 1px solid #b9b9b9;
		border-bottom: 0;
		padding: 0 8px 0 11px;
		display: flex;
		align-items: center;
		justify-content: space-between;
		color: #111;
	}

	.tab-list {
		flex: 1;
		display: grid;
		grid-template-columns: 89px 70px 55px 89px 89px 89px 84px 72px 87px 78px 92px 90px 95px 80px;
		padding: 2px 0 0 10px;
		font-size: 12.2px;
	}

	.tab-arrows {
		margin: 12px 8px 0 0;
	}

	/* 工作区 */
	.workspace {
		height: 593px;
		box-sizing: border-box;
		margin: 0 3px;
		border: 1px solid #bdbdbd;
		padding: 2px 2px 1px;
	}

	.desk {
		display: flex;
		height: 585px;
		background: #070707;
		border: 1px solid #999;
		outline: 1px solid #0a74c8;
		margin: 1px;
		width: 1342px;
	}

	.left {
		width: 1082px;
		border-right: 1px solid #444;
		display: flex;
		flex-direction: column;
	}

	.periods {
		height: 22px;
		display: grid;
		grid-template-columns: 44px 52px 61px 61px 45px 43px 83px 44px 44px 44px 54px 59px 43px 54px 54px 58px 1fr;
		padding-left: 1px;
		color: #a8a8a8;
		font-size: 14px;
		line-height: 18px;
	}

	.periods span {
		height: 19px;
		margin-top: 1px;
		border: 1px solid #3a3a3a;
		border-left: 0;
		text-align: center;
		text-indent: -2px;
	}

	.periods span.on {
		border: 1px solid #ff5a00;
		color: #ff5a00;
		margin-left: -1px;
	}

	.periods i {
		display: inline-block;
		border: 4px solid transparent;
		border-top: 7px solid #a8a8a8;
		border-bottom: 0;
		margin: 0 0 1px 7px;
	}

	.maxi {
		justify-self: end;
		width: 25px;
		height: 19px;
		margin: 1px 1px 0 0;
		border: 1px solid #3a3a3a;
		display: flex;
		align-items: center;
		justify-content: center;
	}

	.maxi::after {
		content: '';
		width: 8px;
		height: 8px;
		border: 1px solid #3a3a3a;
	}

	.panes {
		flex: 1;
		display: flex;
	}

	.chart-pane {
		width: 828px;
	}

	.chart {
		display: block;
		font-size: 12.5px;
	}

	.indicators {
		height: 21px;
		box-sizing: border-box;
		border-top: 1px solid #333;
		display: grid;
		grid-template-columns: 43px 80px 58px 44px 60px 41px 38px 50px 39px 47px 37px 35px 51px 39px 73px 42px;
		padding: 1px 0 0 3px;
		color: #989898;
		font-size: 14px;
		line-height: 18px;
	}

	.indicators .solid {
		width: 40px;
		background: #3c3c3c;
		color: #d0d0d0;
		text-align: center;
	}

	.indicators .boxed {
		width: max-content;
		height: 16px;
		line-height: 16px;
		border: 1px solid #3c3c3c;
		padding: 0 6px;
	}

	.indicators .boxed:last-child {
		padding: 0 1px;
		letter-spacing: -1px;
	}

	.indicators .picked {
		color: #ffff99;
	}

	.splitter {
		width: 2px;
		border-left: 1px solid #777;
		border-right: 1px solid #777;
		background: #111;
	}

	.console {
		width: 250px;
		background: #0a0a0a;
		color: #c3cbd3;
	}

	.console-head {
		height: 26px;
		box-sizing: border-box;
		display: grid;
		grid-template-columns: 66px 45px 31px 23px;
		padding-left: 3px;
		background: #000;
		border-bottom: 1px solid #fff;
		line-height: 26px;
		color: #fff;
	}

	.console-head .name {
		color: #b5b5b5;
	}

	.pin {
		height: 22px;
		margin-top: 2px;
		background: #44494d;
		display: flex;
		align-items: center;
		justify-content: center;
	}

	.console p {
		margin: 0;
		padding: 1px 4px 4px 5px;
		font-size: 12.1px;
		line-height: 18px;
		word-break: break-all;
	}

	.console .sel {
		background: #1f4262;
	}

	/* 报价面板 */
	.quote {
		width: 259px;
		color: #9a9a9a;
		font-size: 14px;
		line-height: 18px;
	}

	.up {
		color: #ff5050;
	}

	.down {
		color: #00ff40;
	}

	.num {
		color: #ff0;
	}

	.q-title {
		height: 22px;
		padding: 3px 5px 0 3px;
		box-sizing: border-box;
		display: flex;
		color: #ff0;
		font-size: 15.4px;
	}

	.q-title sup {
		margin: -2px 0 0 3px;
		font-size: 12px;
		line-height: 16px;
		color: #ff5050;
	}

	.q-title b {
		margin-left: auto;
		font-size: 16px;
		color: #0ff;
	}

	.q-last {
		height: 20px;
		display: flex;
		gap: 9px;
		padding-left: 4px;
		line-height: 20px;
	}

	.q-last b {
		font-size: 17.3px;
		line-height: 18px;
		color: #ff5050;
	}

	.book {
		border-top: 1px solid #444;
		height: 89px;
	}

	.book-row {
		height: 18px;
		display: grid;
		grid-template-columns: 60px 63px 79px;
		padding-left: 3px;
	}

	.book-row span + span {
		text-align: right;
	}

	.stats {
		border-top: 1px solid #444;
		display: grid;
		grid-template-columns: 130px 129px;
		grid-auto-rows: 18px;
		height: 125px;
	}

	.stat {
		display: flex;
		justify-content: space-between;
		padding: 0 2px 0 3px;
	}

	.stat:nth-child(odd) {
		border-right: 1px solid #444;
	}

	.trade-head {
		position: relative;
		height: 17px;
		background: #070707;
		border-top: 1px solid #444;
		border-bottom: 1px solid #444;
		display: grid;
		grid-template-columns: 63px 77px 45px 45px 29px;
		line-height: 16px;
	}

	.trade-head span {
		text-align: right;
	}

	.trade-head span:nth-child(1) {
		padding-right: 19px;
	}

	.trade-head span:nth-child(2) {
		padding-right: 26px;
	}

	.trade-head span:nth-child(3),
	.trade-head span:nth-child(4) {
		margin-left: -10px;
		padding-right: 10px;
	}

	.trade-head span:nth-child(5) {
		letter-spacing: -0.5px;
	}

	.trades {
		position: relative;
		height: 218px;
	}

	.trade {
		height: 18px;
		line-height: 20px;
		display: grid;
		grid-template-columns: 63px 77px 45px 45px 29px;
	}

	.trade span {
		text-align: right;
		padding-right: 3px;
		border-right: 1px solid #444;
	}

	.trade .time {
		color: #fff;
		padding-right: 2px;
	}

	.trade .price {
		padding-right: 13px;
	}

	.trade .kind {
		text-align: left;
		padding: 0 0 0 3px;
		border: 0;
		font-size: 11.5px;
	}

	.clock {
		position: absolute;
		left: 94px;
		top: 24px;
		font: bold 52px 'Liberation Mono', monospace;
		fill: #f0f;
		stroke: #ffd8ff;
		stroke-width: 0.8px;
	}

	/* 状态栏 */
	.status {
		flex: 1;
		display: flex;
		align-items: center;
		padding: 0 10px 1px 14px;
	}

	.ticker {
		flex: 1;
		display: grid;
		grid-template-columns: 56px 57px 46px 49px 75px 56px 64px 54px 49px 75px 54px 56px 47px 49px 75px 81px 59px 100px;
		font-weight: 600;
		color: #000;
	}

	.ticker .g {
		color: #008000;
	}

	.ticker .r {
		color: #f00;
	}

	.ticker .ver {
		font-weight: 400;
		color: #222;
	}

	/* 输入法条 */
	.ime {
		position: absolute;
		left: 699px;
		top: 0;
		width: 145px;
		height: 20px;
		display: flex;
		align-items: center;
		background: #f4f4f4;
		border: 1px solid #c5c5c5;
		color: #555;
		font-size: 14px;
	}

	.ime-logo {
		width: 14px;
		height: 14px;
		margin: 0 5px;
		border: 1px solid #a8453f;
		font-size: 11px;
		font-weight: 700;
		line-height: 14px;
		text-align: center;
		color: #222;
	}

	.ime svg {
		margin-left: 5px;
	}

	/* 网速浮窗 */
	.netmon {
		position: absolute;
		left: 867px;
		top: 0;
		width: 261px;
		height: 32px;
		padding-left: 12px;
		display: flex;
		align-items: center;
		border-radius: 0 0 9px 9px;
		background: rgba(50, 55, 66, 0.45);
		box-shadow: 0 0 3px rgba(0, 0, 0, 0.4);
		color: #fff;
	}

	.netmon .sep {
		width: 1px;
		height: 22px;
		margin: 0 7px 0 6px;
		background: rgba(0, 0, 0, 0.2);
	}

	.meter {
		width: 30px;
		height: 10px;
		border-radius: 5px;
		background: linear-gradient(90deg, #3fc9a0 7px, #4b647b 7px);
	}

	.netmon b {
		width: 17px;
		margin-left: 7px;
		font-size: 11.5px;
		font-weight: 500;
	}

	.netmon em {
		width: 15px;
		margin: 0 6px;
		font-style: normal;
		font-size: 10px;
		color: #b4c0ca;
	}

	/* 任务栏 */
	.taskbar {
		height: 40px;
		display: flex;
		background: #080e16;
		color: #fff;
	}

	.task-start {
		width: 151px;
		display: flex;
		align-items: center;
		gap: 31px;
		padding-left: 16px;
		box-sizing: border-box;
	}

	.task {
		width: 153px;
		box-sizing: border-box;
		display: flex;
		align-items: center;
		gap: 4px;
		padding: 2px 0 0 6px;
		border-bottom: 3px solid #76b9ed;
	}

	.current {
		width: 160px;
		margin-left: 4px;
		padding-left: 10px;
		background: #3c4248;
	}

	.wide {
		letter-spacing: 0.15px;
	}

	.calc {
		margin: 8px 20px 0 19px;
	}

	.tray {
		flex: 1;
		display: flex;
		align-items: center;
		justify-content: flex-end;
		padding-right: 14px;
	}

	.zh {
		margin-left: 3px;
		font-size: 13px;
	}

	.wubi {
		width: 16px;
		height: 16px;
		margin-left: 13px;
		background: #2b83f0;
		text-align: center;
		font-weight: 700;
	}

	.date {
		width: 92px;
		display: flex;
		flex-direction: column;
		align-items: center;
		line-height: 19px;
	}
</style>
